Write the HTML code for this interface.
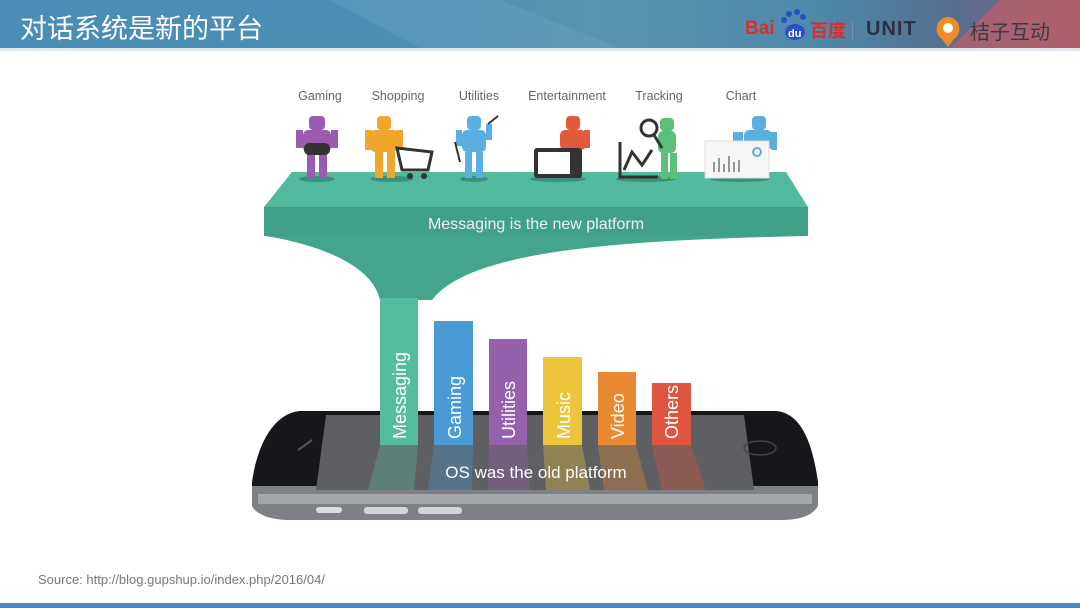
<!DOCTYPE html>
<html><head><meta charset="utf-8"><style>
body{margin:0;width:1080px;height:608px;overflow:hidden;background:#fff;font-family:"Liberation Sans","Noto Sans CJK SC",sans-serif;position:relative}
.hdr{position:absolute;left:0;top:0;width:1080px;height:48px;background:linear-gradient(90deg,#4a8db8 0%,#4b8fb3 40%,#5a93ad 55%,#4e8aab 75%,#556f90 88%,#8d5d70 100%)}
.title{position:absolute;left:20px;top:7px;color:#fff;font-size:27px;font-family:"Noto Sans CJK SC",sans-serif;letter-spacing:0px}
.lbl{position:absolute;top:89px;font-size:12.5px;color:#666;transform:translateX(-50%)}
.src{position:absolute;left:38px;top:572px;font-size:13px;color:#777}
</style></head><body>
<div class="hdr"></div>
<svg style="position:absolute;left:0;top:0" width="1080" height="52">
<polygon points="330,0 500,0 620,48 420,48" fill="#6ea6c4" opacity="0.35"/>
<polygon points="1000,0 1080,0 1080,48 950,48" fill="#c0606a" opacity="0.7"/>
<rect x="0" y="48" width="1080" height="3" fill="#dfe7ec"/>
</svg>
<div class="title">对话系统是新的平台</div>
<div style="position:absolute;left:745px;top:18px;font-weight:bold;font-size:19px;color:#d9302a">Bai</div>
<svg style="position:absolute;left:779px;top:9px" width="34" height="34"><circle cx="10" cy="5" r="3" fill="#2a4fc8"/><circle cx="18" cy="3" r="3" fill="#2a4fc8"/><circle cx="24" cy="8" r="3" fill="#2a4fc8"/><circle cx="5" cy="11" r="3" fill="#2a4fc8"/><ellipse cx="16" cy="23" rx="10" ry="8" fill="#2a4fc8"/><text x="9" y="28" font-size="11" font-weight="bold" fill="#fff" font-family="Liberation Sans">du</text></svg>
<div style="position:absolute;left:810px;top:19px;font-size:18px;color:#d9302a;font-family:'Noto Sans CJK SC',sans-serif;font-weight:bold;line-height:22px">百度</div>
<div style="position:absolute;left:852px;top:22px;width:1px;height:18px;background:#889"></div>
<div style="position:absolute;left:866px;top:18px;font-size:20px;color:#2c3040;font-weight:bold;letter-spacing:1px">UNIT</div>
<svg style="position:absolute;left:934px;top:15px" width="28" height="34"><path d="M14 2a12 12 0 0 1 6 22l-6 8-6-8A12 12 0 0 1 14 2z" fill="#f08c28"/><circle cx="14" cy="13" r="5" fill="#fff"/></svg>
<div style="position:absolute;left:970px;top:18px;font-size:20px;color:#3a3a48;font-family:'Noto Sans CJK SC',sans-serif;line-height:26px">桔子互动</div>

<div class="lbl" style="left:320px">Gaming</div>
<div class="lbl" style="left:398px">Shopping</div>
<div class="lbl" style="left:479px">Utilities</div>
<div class="lbl" style="left:567px">Entertainment</div>
<div class="lbl" style="left:659px">Tracking</div>
<div class="lbl" style="left:741px">Chart</div>

<svg style="position:absolute;left:0;top:0" width="1080" height="608">
<polygon points="292,172 786,172 808,207 264,207" fill="#52b99e"/>
<rect x="264" y="207" width="544" height="29" fill="#41a088"/>
<path d="M266,236 L808,236 C620,240 470,250 432,300 L380,300 C372,265 320,245 266,236z" fill="#44a58c"/>
<rect x="380" y="298" width="38" height="10" fill="#56bc9f"/>
<text x="536" y="229" text-anchor="middle" fill="#eef" font-size="16" font-family="Liberation Sans">Messaging is the new platform</text>
<g>
<ellipse cx="317" cy="179" rx="18" ry="3" fill="#3e8f7a"/>
<rect x="309" y="116" width="16" height="14" rx="4" fill="#9a5cb0"/><rect x="303" y="130" width="28" height="22" rx="5" fill="#9a5cb0"/><rect x="296" y="130" width="7" height="18" fill="#9a5cb0"/><rect x="331" y="130" width="7" height="18" fill="#9a5cb0"/><rect x="307" y="152" width="8" height="26" fill="#9a5cb0"/><rect x="319" y="152" width="8" height="26" fill="#9a5cb0"/><rect x="304" y="143" width="26" height="12" rx="5" fill="#333"/>
<ellipse cx="392" cy="179" rx="22" ry="3" fill="#3e8f7a"/>
<rect x="377" y="116" width="14" height="14" rx="4" fill="#f0a52c"/><rect x="370" y="130" width="28" height="22" rx="5" fill="#f0a52c"/><rect x="365" y="130" width="7" height="20" fill="#f0a52c"/><rect x="396" y="130" width="7" height="20" fill="#f0a52c"/><rect x="375" y="152" width="8" height="26" fill="#f0a52c"/><rect x="387" y="152" width="8" height="26" fill="#f0a52c"/>
<path d="M397,148 L402,170 L428,170 L432,152 Z" fill="none" stroke="#333" stroke-width="3"/><circle cx="410" cy="176" r="3" fill="#333"/><circle cx="424" cy="176" r="3" fill="#333"/>
<ellipse cx="474" cy="179" rx="14" ry="3" fill="#3e8f7a"/>
<rect x="467" y="116" width="14" height="14" rx="4" fill="#5aaee0"/><rect x="462" y="130" width="24" height="22" rx="5" fill="#5aaee0"/><rect x="456" y="130" width="6" height="16" fill="#5aaee0"/><rect x="486" y="124" width="6" height="16" fill="#5aaee0"/><rect x="465" y="152" width="7" height="26" fill="#5aaee0"/><rect x="476" y="152" width="7" height="26" fill="#5aaee0"/><path d="M488,124 L498,116" stroke="#333" stroke-width="2"/><path d="M455,142 L460,162" stroke="#333" stroke-width="2"/>
<ellipse cx="558" cy="179" rx="28" ry="3" fill="#3e8f7a"/>
<rect x="566" y="116" width="14" height="14" rx="4" fill="#e05a3c"/><rect x="560" y="130" width="26" height="20" rx="5" fill="#e05a3c"/><rect x="584" y="130" width="6" height="18" fill="#e05a3c"/>
<rect x="534" y="148" width="48" height="30" rx="3" fill="#333"/><rect x="538" y="152" width="32" height="22" fill="#fff"/>
<ellipse cx="646" cy="179" rx="30" ry="3" fill="#3e8f7a"/>
<rect x="660" y="118" width="14" height="13" rx="4" fill="#5cc07a"/><rect x="658" y="131" width="18" height="22" rx="5" fill="#5cc07a"/><rect x="661" y="153" width="7" height="26" fill="#5cc07a"/><rect x="670" y="153" width="7" height="26" fill="#5cc07a"/>
<circle cx="649" cy="128" r="8" fill="none" stroke="#333" stroke-width="3"/><path d="M654,135 L662,148" stroke="#333" stroke-width="3"/>
<path d="M620,142 L620,177 L658,177 M624,170 L632,152 L642,165 L652,150" fill="none" stroke="#333" stroke-width="3"/>
<ellipse cx="740" cy="179" rx="30" ry="3" fill="#3e8f7a"/>
<rect x="752" y="116" width="14" height="14" rx="4" fill="#5aaee0"/><rect x="744" y="130" width="28" height="20" rx="5" fill="#5aaee0"/><rect x="733" y="132" width="10" height="10" fill="#5aaee0"/><rect x="771" y="132" width="6" height="18" fill="#5aaee0"/>
<rect x="705" y="141" width="64" height="37" fill="#f6f6f6" stroke="#ddd"/><g stroke="#777" stroke-width="1.5"><path d="M714,172v-10M719,172v-14M724,172v-8M729,172v-16M734,172v-10M739,172v-12"/></g><circle cx="757" cy="152" r="4" fill="none" stroke="#5aaee0" stroke-width="2"/>
</g>
<path d="M300,411 L776,411 C800,413 812,440 818,482 L818,500 L252,500 L252,482 C258,440 276,413 300,411z" fill="#16171a"/>
<path d="M252,486 L818,486 L818,506 C812,516 800,520 780,520 L290,520 C270,520 256,514 252,506z" fill="#7d8084"/>
<rect x="258" y="494" width="554" height="10" fill="#a3a6aa"/>
<rect x="316" y="507" width="26" height="6" rx="3" fill="#dcdde0"/><rect x="364" y="507" width="44" height="7" rx="3" fill="#d3d4d7"/><rect x="418" y="507" width="44" height="7" rx="3" fill="#d3d4d7"/>
<polygon points="326,415 744,415 754,490 316,490" fill="#5e5f62"/>
<ellipse cx="760" cy="448" rx="16" ry="7" fill="none" stroke="#444" stroke-width="1.5"/>
<path d="M298,450 L312,440" stroke="#555" stroke-width="2"/>
<g opacity="0.35"><polygon points="380,445 418,445 414,490 368,490" fill="#56bc9f"/><polygon points="434,445 473,445 472,490 428,490" fill="#4a9ad6"/><polygon points="489,445 527,445 530,490 488,490" fill="#9561ad"/><polygon points="543,445 582,445 590,490 546,490" fill="#ecc53c"/><polygon points="598,445 636,445 648,490 604,490" fill="#e98a32"/><polygon points="652,445 691,445 706,490 662,490" fill="#e0553f"/></g>
<rect x="380" y="300" width="38" height="145" fill="#56bc9f"/>
<rect x="434" y="321" width="39" height="124" fill="#4a9ad6"/>
<rect x="489" y="339" width="38" height="106" fill="#9561ad"/>
<rect x="543" y="357" width="39" height="88" fill="#ecc53c"/>
<rect x="598" y="372" width="38" height="73" fill="#e98a32"/>
<rect x="652" y="383" width="39" height="62" fill="#e0553f"/>
<g fill="#fff" font-size="18" font-family="Liberation Sans">
<text transform="translate(406,439) rotate(-90)">Messaging</text>
<text transform="translate(461,439) rotate(-90)">Gaming</text>
<text transform="translate(515,439) rotate(-90)">Utilities</text>
<text transform="translate(570,439) rotate(-90)">Music</text>
<text transform="translate(624,439) rotate(-90)">Video</text>
<text transform="translate(678,439) rotate(-90)">Others</text>
</g>
<text x="536" y="478" text-anchor="middle" fill="#fff" font-size="17" font-family="Liberation Sans">OS was the old platform</text>
<rect x="0" y="603" width="1080" height="5" fill="#4a8db8"/>
</svg>
<div class="src">Source: http://blog.gupshup.io/index.php/2016/04/</div>
</body></html>
